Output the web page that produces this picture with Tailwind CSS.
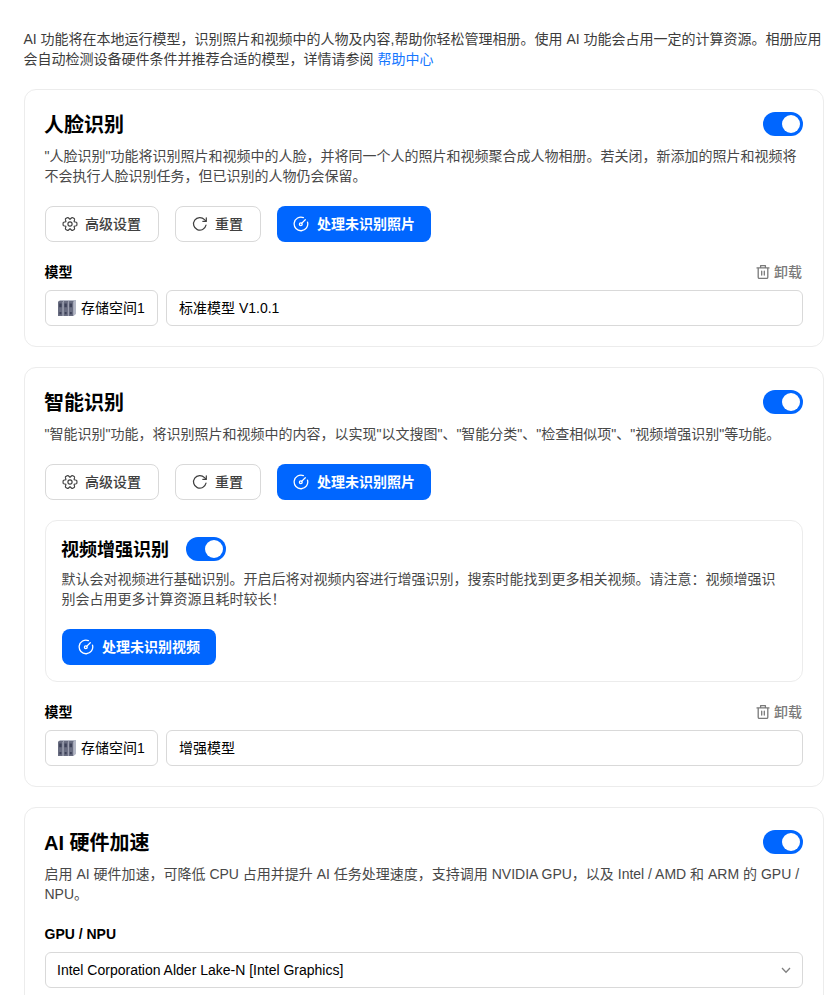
<!doctype html>
<html lang="zh-CN">
<head>
  <meta charset="UTF-8">
  <meta name="viewport" content="width=device-width, initial-scale=1.0">
  <title>AI 功能</title>
  <script src="https://cdn.jsdelivr.net/npm/@tailwindcss/browser@4"></script>
</head>
<body class="bg-white h-screen overflow-hidden font-['Liberation_Sans','Noto_Sans_CJK_SC',sans-serif] text-sm leading-5 text-black">
<!--Shared icons-->
<svg class="hidden">
  <symbol id="gear" viewBox="0 0 16 16" fill="none" stroke="currentColor" stroke-width="1.15" stroke-linejoin="round">
    <path transform="rotate(90 8 8)" d="M5.7 3.9 6.3 1.7Q6.5 1.1 7.1 1.1H8.9Q9.5 1.1 9.7 1.7L10.3 3.9 12.6 3.4Q13.2 3.3 13.5 3.8L14.3 5.2Q14.6 5.8 14.2 6.3L12.7 8 14.2 9.7Q14.6 10.2 14.3 10.8L13.5 12.2Q13.2 12.7 12.6 12.6L10.3 12.1 9.7 14.3Q9.5 14.9 8.9 14.9H7.1Q6.5 14.9 6.3 14.3L5.7 12.1 3.4 12.6Q2.8 12.7 2.5 12.2L1.7 10.8Q1.4 10.2 1.8 9.7L3.3 8 1.8 6.3Q1.4 5.8 1.7 5.2L2.5 3.8Q2.8 3.3 3.4 3.4Z"/>
    <circle cx="8" cy="8" r="2.1"/>
  </symbol>
  <symbol id="reset" viewBox="0 0 16 16" fill="none" stroke="currentColor" stroke-width="1.2" stroke-linecap="round" stroke-linejoin="round">
    <path d="M14 9.2A6.3 6.3 0 1 1 12.5 3.6L14 5.2"/>
    <path d="M14.3 1.8V5.3H10.8"/>
  </symbol>
  <symbol id="gauge" viewBox="0 0 16 16" fill="none" stroke="currentColor" stroke-width="1.3" stroke-linecap="round">
    <path d="M10.4 1.6A6.8 6.8 0 1 0 14.5 6.1"/>
    <path d="M8.6 7.4 12.3 3.7"/>
    <circle cx="7.8" cy="8.2" r="1.4"/>
  </symbol>
  <symbol id="trash" viewBox="0 0 16 16" fill="none" stroke="currentColor" stroke-width="1.3" stroke-linecap="round" stroke-linejoin="round">
    <path d="M2 3.9H14M5.6 3.7V1.6H10.4V3.7M3.2 4V13.2Q3.2 14.4 4.4 14.4H11.6Q12.8 14.4 12.8 13.2V4M6.7 7.2V11M9.3 7.2V11"/>
  </symbol>
  <symbol id="disks" viewBox="0 0 18 16">
    <path d="M2 0H18V14L15.5 16H0V2Z" fill="#b4b8c6"/>
    <path d="M0 2 1 1H5.4L4.7 2V16H0ZM5.4 2 6.2 1H10.6L10 2V16H5.4ZM10.6 2 11.4 1H15.8L15.2 2V16H10.6Z" fill="#686c80"/>
    <path d="M1.2 3.5H3.6V7.2H1.2ZM6.4 3.5H8.8V7.2H6.4ZM11.6 3.5H14V7.2H11.6ZM1.5 12H3.4V14.3H1.5ZM6.7 12H8.6V14.3H6.7ZM11.9 12H13.8V14.3H11.9Z" fill="#3d4158"/>
    <path d="M5 2V16M10.3 2V16" stroke="#a4a8b8" stroke-width=".7"/>
  </symbol>
</svg>

<div class="w-[800px] ml-6 pt-[29px]">
  <p class="text-[#3c3c3c] whitespace-nowrap -ml-[0.5px]">AI 功能将在本地运行模型，识别照片和视频中的人物及内容,帮助你轻松管理相册。使用 AI 功能会占用一定的计算资源。相册应用<br>会自动检测设备硬件条件并推荐合适的模型，详情请参阅 <a href="#" class="text-[#1677ff]">帮助中心</a></p>

  <!--Face recognition-->
  <section class="mt-5 border border-[#ececec] rounded-xl p-5">
    <div class="flex items-center justify-between">
      <h2 class="text-xl leading-7 font-bold -ml-px pt-px -mb-px">人脸识别</h2>
      <button class="w-10 h-6 rounded-full bg-[#0066ff] p-[3px] flex justify-end"><span class="size-[18px] rounded-full bg-white"></span></button>
    </div>
    <p class="mt-2 text-[#484848] whitespace-nowrap -ml-[0.5px]">"人脸识别"功能将识别照片和视频中的人脸，并将同一个人的照片和视频聚合成人物相册。若关闭，新添加的照片和视频将<br>不会执行人脸识别任务，但已识别的人物仍会保留。</p>
    <div class="mt-5 flex gap-4">
      <button class="w-[114px] h-9 pl-4 flex items-center gap-[7px] border border-[#d9d9d9] rounded-lg text-[#404040] font-medium"><svg class="size-4"><use href="#gear"/></svg>高级设置</button>
      <button class="w-[86px] h-9 pl-4 flex items-center gap-[7px] border border-[#d9d9d9] rounded-lg text-[#404040] font-medium"><svg class="size-4"><use href="#reset"/></svg>重置</button>
      <button class="h-9 px-4 flex items-center gap-2 bg-[#0066ff] rounded-lg text-white font-bold"><svg class="size-4"><use href="#gauge"/></svg>处理未识别照片</button>
    </div>
    <div class="mt-5 flex justify-between">
      <h3 class="font-bold -ml-[0.5px]">模型</h3>
      <button class="flex items-center gap-[3px] text-[#7a7a7a] font-medium mr-px"><svg class="size-4"><use href="#trash"/></svg>卸载</button>
    </div>
    <div class="mt-2 flex gap-2">
      <div class="w-[113px] h-9 px-3 flex items-center gap-[5px] border border-[#d9d9d9] rounded-md whitespace-nowrap"><svg class="w-[18px] h-4 shrink-0"><use href="#disks"/></svg>存储空间1</div>
      <div class="flex-1 h-9 px-3 flex items-center border border-[#d9d9d9] rounded-md">标准模型 V1.0.1</div>
    </div>
  </section>

  <!--Smart recognition-->
  <section class="mt-5 border border-[#ececec] rounded-xl p-5">
    <div class="flex items-center justify-between">
      <h2 class="text-xl leading-7 font-bold -ml-px pt-px -mb-px">智能识别</h2>
      <button class="w-10 h-6 rounded-full bg-[#0066ff] p-[3px] flex justify-end"><span class="size-[18px] rounded-full bg-white"></span></button>
    </div>
    <p class="mt-2 text-[#484848] whitespace-nowrap -ml-[0.5px]">"智能识别"功能，将识别照片和视频中的内容，以实现"以文搜图"、"智能分类"、"检查相似项"、"视频增强识别"等功能。</p>
    <div class="mt-5 flex gap-4">
      <button class="w-[114px] h-9 pl-4 flex items-center gap-[7px] border border-[#d9d9d9] rounded-lg text-[#404040] font-medium"><svg class="size-4"><use href="#gear"/></svg>高级设置</button>
      <button class="w-[86px] h-9 pl-4 flex items-center gap-[7px] border border-[#d9d9d9] rounded-lg text-[#404040] font-medium"><svg class="size-4"><use href="#reset"/></svg>重置</button>
      <button class="h-9 px-4 flex items-center gap-2 bg-[#0066ff] rounded-lg text-white font-bold"><svg class="size-4"><use href="#gauge"/></svg>处理未识别照片</button>
    </div>

    <!--Video enhancement-->
    <div class="mt-5 border border-[#ececec] rounded-xl p-4">
      <div class="flex items-center gap-[17px]">
        <h3 class="text-lg leading-6 font-bold -ml-px pt-px -mb-px">视频增强识别</h3>
        <button class="w-10 h-6 rounded-full bg-[#0066ff] p-[3px] flex justify-end"><span class="size-[18px] rounded-full bg-white"></span></button>
      </div>
      <p class="mt-2 text-[#484848] whitespace-nowrap -ml-[0.5px]">默认会对视频进行基础识别。开启后将对视频内容进行增强识别，搜索时能找到更多相关视频。请注意：视频增强识<br>别会占用更多计算资源且耗时较长！</p>
      <button class="mt-5 h-9 px-4 flex items-center gap-2 bg-[#0066ff] rounded-lg text-white font-bold"><svg class="size-4"><use href="#gauge"/></svg>处理未识别视频</button>
    </div>

    <div class="mt-5 flex justify-between">
      <h3 class="font-bold -ml-[0.5px]">模型</h3>
      <button class="flex items-center gap-[3px] text-[#7a7a7a] font-medium mr-px"><svg class="size-4"><use href="#trash"/></svg>卸载</button>
    </div>
    <div class="mt-2 flex gap-2">
      <div class="w-[113px] h-9 px-3 flex items-center gap-[5px] border border-[#d9d9d9] rounded-md whitespace-nowrap"><svg class="w-[18px] h-4 shrink-0"><use href="#disks"/></svg>存储空间1</div>
      <div class="flex-1 h-9 px-3 flex items-center border border-[#d9d9d9] rounded-md">增强模型</div>
    </div>
  </section>

  <!--Hardware acceleration-->
  <section class="mt-5 border border-[#ececec] rounded-xl p-5">
    <div class="flex items-center justify-between">
      <h2 class="text-xl leading-7 font-bold -ml-px pt-px -mb-px">AI 硬件加速</h2>
      <button class="w-10 h-6 rounded-full bg-[#0066ff] p-[3px] flex justify-end"><span class="size-[18px] rounded-full bg-white"></span></button>
    </div>
    <p class="mt-2 text-[#484848] whitespace-nowrap -ml-[0.5px]">启用 AI 硬件加速，可降低 CPU 占用并提升 AI 任务处理速度，支持调用 NVIDIA GPU，以及 Intel / AMD 和 ARM 的 GPU /<br>NPU。</p>
    <h3 class="mt-5 font-bold -ml-[0.5px]">GPU / NPU</h3>
    <div class="mt-2 h-9 pl-[11px] pr-3 flex items-center justify-between border border-[#d9d9d9] rounded-md">
      <span>Intel Corporation Alder Lake-N [Intel Graphics]</span>
      <svg class="w-2.5 h-2.5 -mr-px" viewBox="0 0 10 10" fill="none" stroke="#808080" stroke-width="1.3"><path d="M1 3 5 7.2 9 3"/></svg>
    </div>
  </section>
</div>
</body>
</html>
